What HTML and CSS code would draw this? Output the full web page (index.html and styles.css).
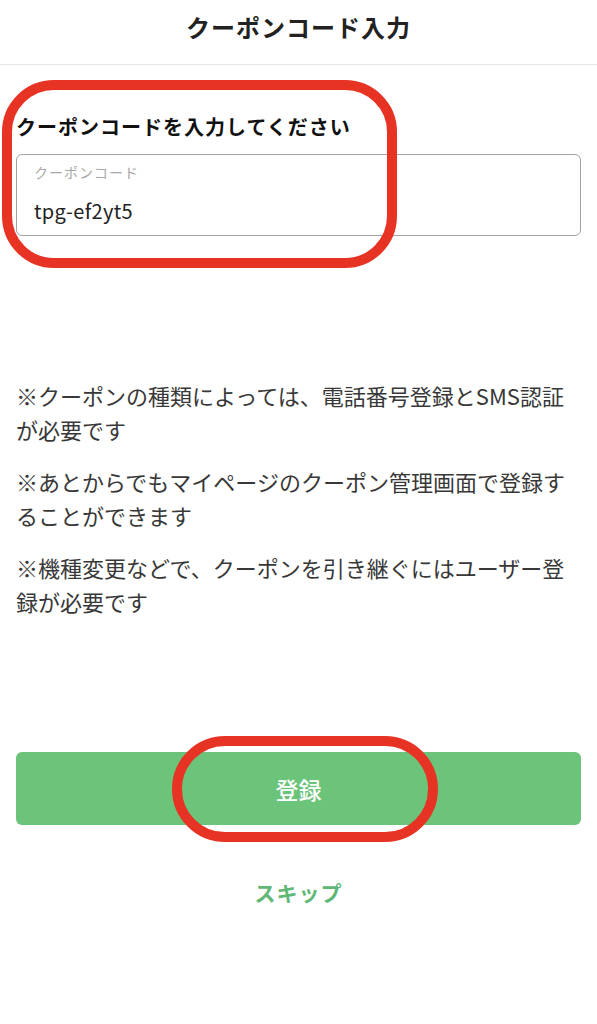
FILE: index.html
```html
<!DOCTYPE html>
<html lang="ja">
<head>
<meta charset="utf-8">
<title>クーポンコード入力</title>
<link rel="stylesheet" href="styles.css">
</head>
<body>
<div class="page">
  <header class="header">
    <h1 class="title">クーポンコード入力</h1>
  </header>
  <main class="content">
    <section class="form-section">
      <h2 class="form-heading">クーポンコードを入力してください</h2>
      <div class="field">
        <div class="field-label">クーポンコード</div>
        <div class="field-value">tpg-ef2yt5</div>
      </div>
      <div class="mark mark-box"></div>
    </section>
    <section class="notes">
      <p class="note">※クーポンの種類によっては、電話番号登録とSMS認証が必要です</p>
      <p class="note">※あとからでもマイページのクーポン管理画面で登録することができます</p>
      <p class="note">※機種変更などで、クーポンを引き継ぐにはユーザー登録が必要です</p>
    </section>
    <section class="actions">
      <div class="button-wrap">
        <button class="btn-primary">登録</button>
        <div class="mark mark-pill"></div>
      </div>
      <a class="skip">スキップ</a>
    </section>
  </main>
</div>
</body>
</html>
```
FILE: styles.css
```css
* { box-sizing: border-box; }
html, body { margin: 0; padding: 0; background: #fff; }
body {
  font-family: "Noto Sans CJK JP", "Noto Sans", sans-serif;
  color: #333;
}
.page { width: 597px; min-height: 1024px; }
.header {
  height: 65px;
  border-bottom: 1px solid #e6e6e6;
  display: flex;
  justify-content: center;
  padding-top: 9px;
}
.title {
  margin: 0;
  font-size: 24px;
  line-height: 36px;
  font-weight: 700;
  color: #222;
  letter-spacing: 1px;
}
.content { padding: 0 16px; }
.form-section { position: relative; padding-top: 48px; }
.form-heading {
  margin: 0 0 13px;
  font-size: 20px;
  line-height: 28px;
  font-weight: 700;
  color: #111;
  letter-spacing: 1px;
}
.field {
  height: 82px;
  border: 1px solid #a3a3a3;
  border-radius: 6px;
  padding: 7px 0 0 17px;
}
.field-label {
  font-size: 14px;
  line-height: 20px;
  color: #a8a8a8;
  letter-spacing: 1px;
}
.field-value {
  margin-top: 16px;
  font-size: 20px;
  line-height: 26px;
  color: #222;
  letter-spacing: 0.3px;
}
.mark {
  position: absolute;
  border: 10px solid #e63324;
  pointer-events: none;
}
.mark-box {
  left: -14px;
  top: 15px;
  width: 395px;
  height: 188px;
  border-radius: 52px;
}
.notes { margin-top: 142px; }
.note {
  margin: 0 0 18px;
  font-size: 22px;
  line-height: 34px;
  color: #383838;
}
.actions {
  margin-top: 134px;
  display: flex;
  flex-direction: column;
  align-items: center;
}
.button-wrap { position: relative; width: 100%; }
.btn-primary {
  display: block;
  width: 100%;
  height: 73px;
  border: 0;
  border-radius: 6px;
  background: #6cc47a;
  color: #fff;
  font-family: inherit;
  font-size: 23px;
  font-weight: 500;
}
.mark-pill {
  left: 156px;
  top: -16px;
  width: 266px;
  height: 106px;
  border-radius: 53px;
}
.skip {
  margin-top: 52px;
  font-size: 21px;
  line-height: 30px;
  font-weight: 700;
  color: #5fb876;
  letter-spacing: 1px;
}
```
